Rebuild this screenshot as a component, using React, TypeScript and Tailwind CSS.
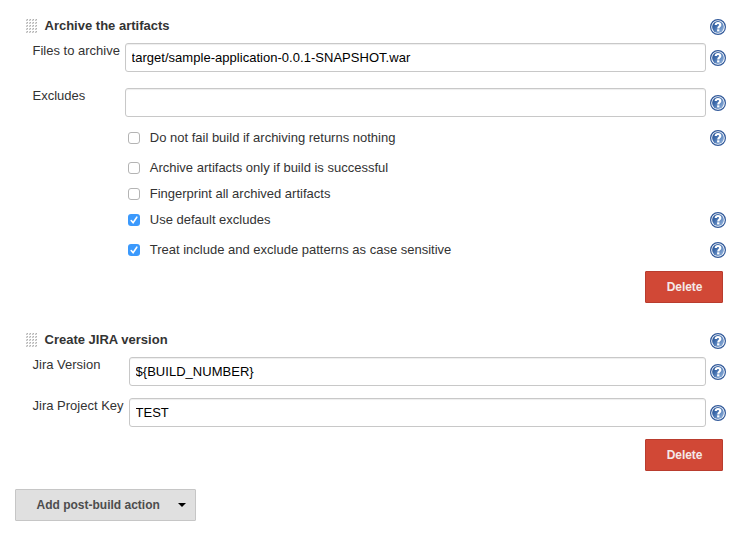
import React from "react";

function HelpIcon() {
  return (
    <svg className="block h-4 w-4 shrink-0" viewBox="0 0 16 16" aria-label="Help">
      <defs>
        <linearGradient id="helpFill" x1="0" y1="0" x2="1" y2="0.8">
          <stop offset="0" stopColor="#1f4a8c" />
          <stop offset="0.4" stopColor="#3f6cac" />
          <stop offset="1" stopColor="#8fb0da" />
        </linearGradient>
      </defs>
      <circle cx="8" cy="8" r="7.4" fill="#fff" stroke="#31599a" strokeWidth="1.2" />
      <circle cx="8" cy="8" r="5.9" fill="url(#helpFill)" />
      <path
        d="M5.7 6C5.8 4.6 6.7 4 8 4c1.5 0 2.3.8 2.3 1.9 0 1.6-2 1.7-2 3.5"
        fill="none"
        stroke="#fff"
        strokeWidth="2.2"
      />
      <rect x="7.1" y="10.3" width="2.3" height="2.1" fill="#fff" />
    </svg>
  );
}

function Grip() {
  return (
    <svg className="mt-1 block h-[14px] w-[12px] shrink-0" viewBox="0 0 12 14" shapeRendering="crispEdges">
      {[0, 3, 6, 9, 12].map((y) =>
        [0, 3, 6, 9].map((x) => (
          <g key={`${x}-${y}`}>
            <rect x={x} y={y} width="2" height="2" fill="#dedede" />
            <rect x={x + 1} y={y} width="1" height="1" fill="#b0b0b0" />
            <rect x={x} y={y + 1} width="1" height="1" fill="#c2c2c2" />
          </g>
        )),
      )}
    </svg>
  );
}

function Heading({ title }: { title: string }) {
  return (
    <div className="flex h-7 items-start pl-[26px] pr-[15px]">
      <Grip />
      <h2 className="ml-[6.5px] mt-[3px] flex-1 text-[13px] font-bold leading-4">{title}</h2>
      <div className="mt-1">
        <HelpIcon />
      </div>
    </div>
  );
}

function Field({ label, value, labelClass }: { label: string; value: string; labelClass: string }) {
  return (
    <div className="flex h-[29px] items-start pr-[15px]">
      <label className={`shrink-0 whitespace-nowrap pl-[32.5px] text-[13px] leading-4 ${labelClass}`}>{label}</label>
      <input
        className="h-[29px] min-w-0 flex-1 rounded-[3px] border border-[#c8c8c8] bg-white px-[5.5px] text-[13px] tracking-[0.03px] text-black shadow-[inset_0_1px_1px_rgba(0,0,0,0.07)] outline-none"
        defaultValue={value}
        aria-label={label}
      />
      <div className="ml-1 mt-[7px]">
        <HelpIcon />
      </div>
    </div>
  );
}

function Option({ label, checked, help, rowClass }: { label: string; checked?: boolean; help?: boolean; rowClass: string }) {
  return (
    <div className={`flex items-start pl-32 pr-[15px] ${rowClass}`}>
      <span
        className={`mt-0.5 flex h-3 w-3 shrink-0 items-center justify-center rounded-[3px] ${
          checked ? "bg-[#3b99fc]" : "border border-[#b4b4b4] bg-white"
        }`}
      >
        {checked && (
          <svg className="h-3 w-3" viewBox="0 0 12 12" fill="none" stroke="#fff" strokeWidth="1.6" strokeLinecap="round">
            <path d="M3.2 6.5 5.1 8.6 8.8 3.2" />
          </svg>
        )}
      </span>
      <span className="ml-[9.75px] flex-1 text-[13px] leading-4">{label}</span>
      {help && <HelpIcon />}
    </div>
  );
}

function DeleteRow() {
  return (
    <div className="flex justify-end pr-[18px]">
      <button className="h-8 w-[78px] rounded-[1px] border border-[#b93c2e] bg-[#d14836] pl-px text-[12px] font-bold tracking-[-0.05px] text-[#f4e9e8]">
        Delete
      </button>
    </div>
  );
}

export default function App() {
  return (
    <main className="h-[538px] w-[741px] bg-white pt-[15px] font-['Liberation_Sans',Arial,sans-serif] text-[#333]">
      <section>
        <Heading title="Archive the artifacts" />
        <Field label="Files to archive" value="target/sample-application-0.0.1-SNAPSHOT.war" labelClass="w-[125px]" />
        <div className="h-4" />
        <Field label="Excludes" value="" labelClass="w-[125px]" />
        <div className="mt-[13px]">
          <Option label="Do not fail build if archiving returns nothing" help rowClass="h-[30px]" />
          <Option label="Archive artifacts only if build is successful" rowClass="h-[26px]" />
          <Option label="Fingerprint all archived artifacts" rowClass="h-[26px]" />
          <Option label="Use default excludes" checked help rowClass="h-[30px]" />
          <Option label="Treat include and exclude patterns as case sensitive" checked help rowClass="h-[29px]" />
        </div>
        <DeleteRow />
      </section>
      <section className="pt-[26px]">
        <Heading title="Create JIRA version" />
        <Field label="Jira Version" value="${BUILD_NUMBER}" labelClass="w-[129px]" />
        <div className="h-3" />
        <Field label="Jira Project Key" value="TEST" labelClass="w-[129px]" />
        <div className="h-3" />
        <DeleteRow />
      </section>
      <button className="ml-[15px] mt-[18px] flex h-8 w-[181px] items-center rounded-[1px] border border-[#c6c6c6] bg-[#e0e0e0] pl-[20.5px] text-[12px] font-bold text-[#4d4d4d]">
        <span>Add post-build action</span>
        <svg className="ml-auto mr-[9px] h-1 w-2" viewBox="0 0 8 4">
          <path d="M0 0h8L4 4z" fill="#000" />
        </svg>
      </button>
    </main>
  );
}
